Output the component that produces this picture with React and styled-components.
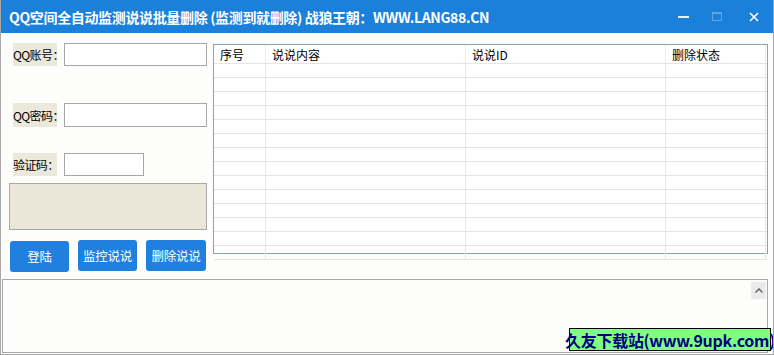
import React from 'react';
import styled, { createGlobalStyle } from 'styled-components';

const GlobalStyle = createGlobalStyle`
  html, body {
    margin: 0;
    padding: 0;
    background: #ffffff;
  }
  body {
    font-family: "Noto Sans CJK SC", "DejaVu Sans", sans-serif;
    font-size: 12px;
    color: #000;
  }
`;

const Window = styled.div`
  position: relative;
  box-sizing: border-box;
  width: 774px;
  height: 355px;
  background: #fdfdfb;
  border: 1px solid #a8a8a8;
  border-top: none;
  display: flex;
  flex-direction: column;
  overflow: hidden;
`;

const TitleBar = styled.div`
  height: 33px;
  margin: 0 -1px;
  background: #1b80d9;
  display: flex;
  align-items: center;
  padding-left: 9px;
  flex-shrink: 0;
`;

const Title = styled.div`
  flex: 1;
  color: #fff;
  font-weight: bold;
  font-size: 14px;
  letter-spacing: -0.35px;
  white-space: nowrap;
`;

const Controls = styled.div`
  display: flex;
  align-items: center;
  height: 100%;
`;

const Ctl = styled.div`
  width: ${(p) => p.$w}px;
  height: 33px;
  display: flex;
  align-items: center;
  justify-content: center;
`;

const Main = styled.div`
  display: flex;
  align-items: flex-start;
`;

const LeftPanel = styled.div`
  width: 204px;
  padding-left: 8px;
  display: flex;
  flex-direction: column;
`;

const FieldRow = styled.div`
  display: flex;
  align-items: center;
  margin-top: ${(p) => p.$top}px;
  height: ${(p) => p.$h}px;
`;

const Label = styled.div`
  box-sizing: border-box;
  width: 44px;
  height: 100%;
  margin-left: 4px;
  background: #ebe9dc;
  display: flex;
  align-items: center;
  font-family: "SimSun", "Noto Sans CJK SC", sans-serif;
  font-size: 12px;
  letter-spacing: -0.6px;
  white-space: nowrap;
`;

const Input = styled.div`
  box-sizing: border-box;
  width: ${(p) => p.$w}px;
  height: 100%;
  margin-left: 7px;
  background: #fff;
  border: 1px solid #a6a6a6;
`;

const InfoBox = styled.div`
  box-sizing: border-box;
  width: 198px;
  height: 47px;
  margin-top: 7px;
  background: #ebe7d8;
  border: 1px solid #a8a8a8;
`;

const ButtonRow = styled.div`
  display: flex;
  gap: 9px;
  margin-top: 10px;
  margin-left: 1px;
`;

const Btn = styled.div`
  width: ${(p) => p.$w}px;
  height: 31px;
  margin-top: ${(p) => p.$top || 0}px;
  background: #1f80e0;
  border-radius: 3px;
  color: #fff;
  font-size: 12.5px;
  display: flex;
  align-items: center;
  justify-content: center;
  letter-spacing: -0.3px;
`;

const Table = styled.div`
  box-sizing: border-box;
  width: 555px;
  height: 210px;
  margin-top: 11px;
  border: 1px solid #86a2bd;
  background: #fff;
  display: flex;
  flex-direction: column;
`;

const Row = styled.div`
  display: grid;
  grid-template-columns: 52px 200px 200px 100px;
  height: ${(p) => p.$h}px;
  flex: ${(p) => (p.$fill ? 1 : 'none')};
  border-bottom: ${(p) => (p.$fill ? 'none' : '1px solid #e4e4e2')};
`;

const Cell = styled.div`
  border-right: 1px solid ${(p) => (p.$head ? '#ececec' : '#e6e6e3')};
  padding-left: 6px;
  display: flex;
  align-items: center;
  font-family: "SimSun", "Noto Sans CJK SC", sans-serif;
  font-size: 12px;
  white-space: nowrap;
`;

const LogArea = styled.div`
  position: relative;
  box-sizing: border-box;
  width: 766px;
  height: 74px;
  margin-top: 7px;
  margin-left: 1px;
  border: 1px solid #a8a8a8;
  background: #fdfdfb;
`;

const ScrollUp = styled.div`
  position: absolute;
  top: 2px;
  right: 1px;
  width: 15px;
  height: 17px;
  background: #ebebeb;
  display: flex;
  align-items: center;
  justify-content: center;
`;

const Watermark = styled.div`
  position: absolute;
  right: 2px;
  bottom: 3px;
  box-sizing: border-box;
  width: 202px;
  height: 23px;
  background: #80ff80;
  border: 1px solid #000;
  color: #000080;
  font-weight: bold;
  font-size: 16px;
  display: flex;
  align-items: center;
  justify-content: center;
  white-space: nowrap;
  letter-spacing: -0.3px;
`;

const columns = ['序号', '说说内容', '说说ID', '删除状态'];

export default function App() {
  return (
    <>
      <GlobalStyle />
      <Window>
        <TitleBar>
          <Title>QQ空间全自动监测说说批量删除 (监测到就删除) 战狼王朝：WWW.LANG88.CN</Title>
          <Controls>
            <Ctl $w={34}>
              <svg width="11" height="2"><rect width="11" height="2" fill="#e8f2fc" /></svg>
            </Ctl>
            <Ctl $w={34}>
              <svg width="10" height="9">
                <rect x="0.5" y="0.5" width="9" height="8" fill="none" stroke="#5ea6e6" />
                <rect x="0.5" y="0.5" width="9" height="1.5" fill="#5ea6e6" />
              </svg>
            </Ctl>
            <Ctl $w={40}>
              <svg width="10" height="10">
                <path d="M1 1L9 9M9 1L1 9" stroke="#fff" strokeWidth="1.6" />
              </svg>
            </Ctl>
          </Controls>
        </TitleBar>
        <Main>
          <LeftPanel>
            <FieldRow $top={10} $h={23}>
              <Label>QQ账号：</Label>
              <Input $w={143} />
            </FieldRow>
            <FieldRow $top={37} $h={24}>
              <Label>QQ密码：</Label>
              <Input $w={143} />
            </FieldRow>
            <FieldRow $top={26} $h={23}>
              <Label>验证码：</Label>
              <Input $w={80} />
            </FieldRow>
            <InfoBox />
            <ButtonRow>
              <Btn $w={59} $top={1}>登陆</Btn>
              <Btn $w={59}>监控说说</Btn>
              <Btn $w={60}>删除说说</Btn>
            </ButtonRow>
          </LeftPanel>
          <Table>
            <Row $h={18}>
              {columns.map((c) => (
                <Cell key={c} $head>{c}</Cell>
              ))}
            </Row>
            {Array.from({ length: 14 }).map((_, i) => (
              <Row key={i} $h={13}>
                {columns.map((c) => (
                  <Cell key={c} />
                ))}
              </Row>
            ))}
            <Row $fill>
              {columns.map((c) => (
                <Cell key={c} />
              ))}
            </Row>
          </Table>
        </Main>
        <LogArea>
          <ScrollUp>
            <svg width="8" height="5">
              <path d="M0.5 4.5L4 1L7.5 4.5" fill="none" stroke="#606060" strokeWidth="1.4" />
            </svg>
          </ScrollUp>
        </LogArea>
        <Watermark>久友下载站(www.9upk.com)</Watermark>
      </Window>
    </>
  );
}
